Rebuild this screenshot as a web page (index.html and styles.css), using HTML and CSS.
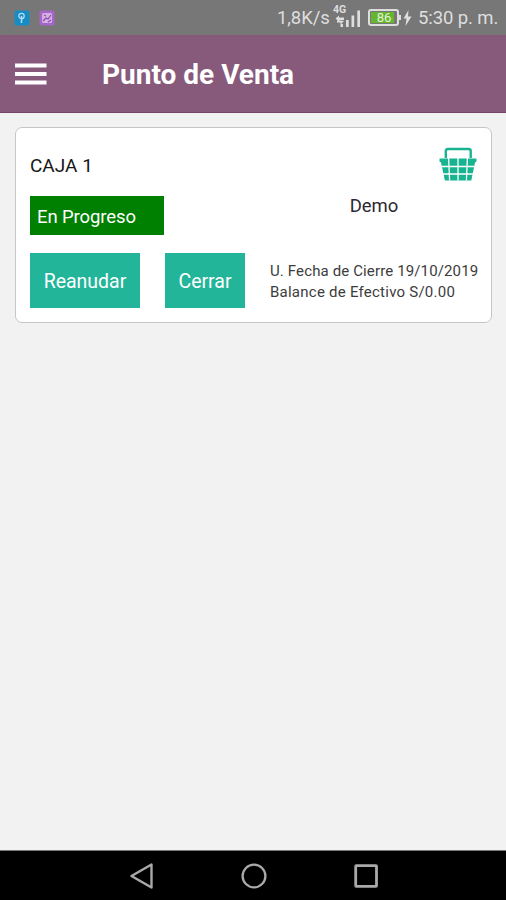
FILE: index.html
```html
<!DOCTYPE html>
<html lang="es">
<head>
<meta charset="utf-8">
<title>Punto de Venta</title>
<link rel="stylesheet" href="styles.css">
</head>
<body>
<div class="screen">
  <div class="status">
    <svg class="notice" width="16" height="16" viewBox="0 0 16 16"><rect x=".5" y=".5" width="15" height="15" rx="2" fill="#168bc4"/><circle cx="7.500" cy="6" r="2.700" fill="none" stroke="#b5dcf2" stroke-width="1.300"/><path d="M7.500 6v7" stroke="#b5dcf2" stroke-width="1.500"/></svg>
    <svg class="notice" width="16" height="16" viewBox="0 0 16 16"><rect x=".5" y=".5" width="15" height="15" rx="2.500" fill="#a765ca"/><rect x="3" y="3" width="10" height="10" rx="1.500" fill="#d3b0e4"/><path d="M4 11l3-3 2 1 3-4M5 5l2 1M9 12l3-2" stroke="#8a4bb0" stroke-width="1.200" fill="none"/></svg>
    <span class="speed">1,8K/s</span>
    <div class="signal">
      <span class="network">4G</span>
      <svg width="29" height="22" viewBox="0 0 29 22"><g fill="#dedede"><path d="M3.500 11.500l3.500-3v2h5v2.500H7v1.500zM12 14l-3.500 3.500v-2H5V13.500h3.500zM8.500 17H11v3H8.500zM14 13h2.700v7H14zM19.500 8.500h2.700V20h-2.700zM25.300 3.500H28V20h-2.700z"/></g></svg>
    </div>
    <div class="battery"><span class="charge">86</span></div>
    <svg class="bolt" width="9" height="16" viewBox="0 0 9 16"><path d="M5.500 0L.5 8.500h3L2.500 16 8.500 6.500H5z" fill="#dedede"/></svg>
    <span class="clock">5:30 p. m.</span>
  </div>
  <header class="appbar">
    <svg width="32" height="22" viewBox="0 0 32 22"><path d="M0 2.500h31.500M0 11h31.500M0 19.500h31.500" stroke="#fff" stroke-width="3.800"/></svg>
    <h1>Punto de Venta</h1>
  </header>
  <main>
    <section class="card">
      <div class="left">
        <div class="name">CAJA 1</div>
        <div class="state"><span>En Progreso</span></div>
        <div class="actions">
          <button class="resume"><span>Reanudar</span></button>
          <button class="close"><span>Cerrar</span></button>
        </div>
      </div>
      <div class="right">
        <svg class="basket" width="38" height="34" viewBox="0 0 38 34">
          <path d="M6.800 11V4q0-2 2-2h20.900q2 0 2 2v7" fill="none" stroke="#18b491" stroke-width="2.400"/>
          <path d="M.5 11.500h37v3l-1.500 1-3.700 18H5.900L2 15.500l-1.500-1z" fill="#18b491"/>
          <path d="M3 19.500h32M4 27h30M9.600 11l1 22.500M19 11v22.500M28.400 11l-1 22.500" stroke="#fff" stroke-width="1.300" fill="none"/>
        </svg>
        <div class="user">Demo</div>
        <div class="details"><div class="closing">U. Fecha de Cierre 19/10/2019</div><div class="balance">Balance de Efectivo S/0.00</div></div>
      </div>
    </section>
  </main>
  <nav class="navbar">
    <svg width="26" height="28" viewBox="0 0 26 28"><path d="M2.500 14L22.500 2.500v23z" fill="none" stroke="#a9a9a9" stroke-width="2.400" stroke-linejoin="round"/></svg>
    <svg width="26" height="28" viewBox="0 0 26 28"><circle cx="13" cy="14" r="11.400" fill="none" stroke="#a9a9a9" stroke-width="2.300"/></svg>
    <svg width="26" height="28" viewBox="0 0 26 28"><rect x="2.700" y="3.700" width="20.800" height="20.600" rx=".5" fill="none" stroke="#a9a9a9" stroke-width="2.800"/></svg>
  </nav>
</div>
</body>
</html>
```
FILE: styles.css
```css
* { box-sizing: border-box; }
body { margin: 0; font-family: Roboto, "Liberation Sans", sans-serif; }
.screen { width: 506px; height: 900px; display: flex; flex-direction: column; background: #f2f2f2; overflow: hidden; white-space: nowrap; }

.status { height: 35px; flex: none; display: flex; align-items: center; padding: 0 8px 0 14px; background: #777; color: #dedede; font-size: 18.5px; }
.notice { margin-right: 9px; }
.speed { margin-left: auto; width: 53px; padding-top: 1px; letter-spacing: -.1px; }
.signal { position: relative; width: 29px; height: 22px; margin: 1px 7px 0 2px; }
.signal svg { display: block; }
.network { position: absolute; left: 1px; top: -3px; font-size: 10.5px; font-weight: 700; line-height: 12px; }
.battery { position: relative; width: 31px; height: 17px; border: 2px solid #dedede; border-radius: 3px; padding: 1px; }
.battery::after { content: ""; position: absolute; right: -4px; top: 4px; width: 2px; height: 5px; background: #dedede; }
.charge { display: block; width: 23px; height: 11px; background: #65b52e; color: #e4f3d8; font-size: 13px; line-height: 12px; text-align: center; padding-left: 3px; }
.bolt { margin: 0 6px 0 4px; }
.clock { width: 80px; padding-top: 1px; letter-spacing: -.1px; }

.appbar { height: 78px; flex: none; display: flex; align-items: center; padding-left: 15px; background: #875a7b; border-bottom: 1px solid #75466a; color: #fff; }
h1 { margin: 3px 0 0 55px; font-size: 28px; line-height: 32px; font-weight: 700; }

main { flex: 1; padding: 14px 14px 0 15px; }
.card { height: 196px; display: flex; justify-content: space-between; padding: 0 14px; background: #fff; border: 1px solid #c6c6c6; border-radius: 7px; }
.left { width: 215px; padding-top: 27px; }
.name { height: 22px; font-size: 19px; line-height: 22px; color: #171717; }
.state { width: 134px; height: 39px; margin: 19px 0 18px; padding-left: 7px; background: #008000; color: #fff; font-size: 18.5px; line-height: 42px; letter-spacing: -.1px; }
.actions { display: flex; justify-content: space-between; }
button { height: 55px; padding: 2px 0 0; border: 0; background: #22b599; color: #fff; font: 19.5px Roboto, sans-serif; }
.resume { width: 110px; }
.close { width: 80px; }
.right { width: 208px; padding-top: 19px; display: flex; flex-direction: column; }
.basket { align-self: flex-end; }
.user { height: 24px; margin-top: 13px; padding-left: 2px; text-align: center; font-size: 18.5px; line-height: 24px; color: #2b2933; }
.details { margin-top: 43px; padding-left: 1px; font-size: 15px; line-height: 21px; color: #3c3c3c; }
.closing { letter-spacing: .13px; }
.balance { letter-spacing: .24px; }

.navbar { height: 50px; flex: none; display: flex; justify-content: center; align-items: center; gap: 86px; padding-left: 2px; background: #000; border-top: 1px solid #777; }
```
